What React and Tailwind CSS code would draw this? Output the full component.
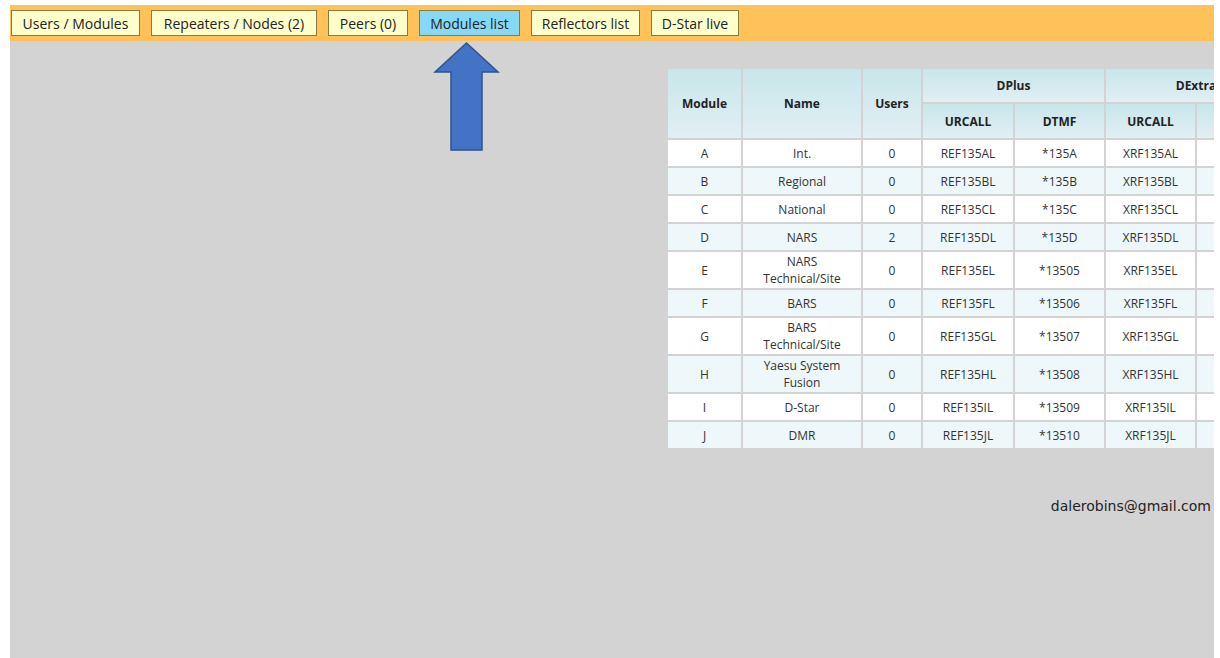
import React from "react";

const tabs = [
  { label: "Users / Modules", w: "w-[129px]" },
  { label: "Repeaters / Nodes (2)", w: "w-[166px]" },
  { label: "Peers (0)", w: "w-[80px]" },
  { label: "Modules list", w: "w-[101px]", active: true },
  { label: "Reflectors list", w: "w-[109px]" },
  { label: "D-Star live", w: "w-[88px]" },
];

const modules = [
  ["A", ["Int."], "0", "REF135AL", "*135A", "XRF135AL", "*135A"],
  ["B", ["Regional"], "0", "REF135BL", "*135B", "XRF135BL", "*135B"],
  ["C", ["National"], "0", "REF135CL", "*135C", "XRF135CL", "*135C"],
  ["D", ["NARS"], "2", "REF135DL", "*135D", "XRF135DL", "*135D"],
  ["E", ["NARS", "Technical/Site"], "0", "REF135EL", "*13505", "XRF135EL", "*13505"],
  ["F", ["BARS"], "0", "REF135FL", "*13506", "XRF135FL", "*13506"],
  ["G", ["BARS", "Technical/Site"], "0", "REF135GL", "*13507", "XRF135GL", "*13507"],
  ["H", ["Yaesu System", "Fusion"], "0", "REF135HL", "*13508", "XRF135HL", "*13508"],
  ["I", ["D-Star"], "0", "REF135IL", "*13509", "XRF135IL", "*13509"],
  ["J", ["DMR"], "0", "REF135JL", "*13510", "XRF135JL", "*13510"],
];

const head =
  "bg-gradient-to-b from-[#c8e6ea] to-[#e2eff4] font-bold text-[#222] text-center align-middle";

function UpArrow() {
  return (
    <svg
      className="absolute left-[423px] top-[0px]"
      width="67"
      height="112"
      viewBox="0 0 67 112"
    >
      <polygon
        points="33.5,2 2,31 18,31 18,109 49,109 49,31 65,31"
        fill="#4472c4"
        stroke="#2f528f"
        strokeWidth="1.5"
        strokeLinejoin="miter"
      />
    </svg>
  );
}

export default function App() {
  return (
    <div
      className="h-[658px] bg-white pl-[10px] pr-[6px] pt-[5px] flex flex-col"
      style={{ fontFamily: '"Open Sans", "Noto Sans", sans-serif' }}
    >
      <nav className="h-[36px] bg-[#ffc25a] flex items-center gap-[11px] pl-[1px] shrink-0">
        {tabs.map((t) => (
          <div
            key={t.label}
            className={`${t.w} h-[26px] flex items-center justify-center border border-[#8a7a3c] text-[14px] text-[#222] ${
              t.active ? "bg-[#86d8f7]" : "bg-[#ffffcc]"
            }`}
          >
            {t.label}
          </div>
        ))}
      </nav>

      <main className="relative flex-1 bg-[#d3d3d3] overflow-hidden">
        <UpArrow />
        <div className="pl-[656px] pt-[26px] w-[1600px]">
          <table className="border-separate border-spacing-[2px] text-[12px] text-[#333] leading-[17px]">
            <thead>
              <tr>
                <th rowSpan={2} className={`${head} w-[73px]`}>Module</th>
                <th rowSpan={2} className={`${head} w-[118px]`}>Name</th>
                <th rowSpan={2} className={`${head} w-[58px]`}>Users</th>
                <th colSpan={2} className={`${head} h-[33px]`}>DPlus</th>
                <th colSpan={2} className={`${head}`}>DExtra</th>
                <th colSpan={2} className={`${head}`}>DCS</th>
              </tr>
              <tr>
                <th className={`${head} w-[90px] h-[34px]`}>URCALL</th>
                <th className={`${head} w-[89px]`}>DTMF</th>
                <th className={`${head} w-[89px]`}>URCALL</th>
                <th className={`${head} w-[89px]`}>DTMF</th>
                <th className={`${head} w-[89px]`}>URCALL</th>
                <th className={`${head} w-[89px]`}>DTMF</th>
              </tr>
            </thead>
            <tbody>
              {modules.map((m, i) => {
                const bg = i % 2 === 0 ? "bg-white" : "bg-[#eef8fa]";
                const cell = `${bg} text-center align-middle h-[26px] py-[1px]`;
                return (
                  <tr key={m[0]}>
                    <td className={cell}>{m[0]}</td>
                    <td className={cell}>
                      {m[1].map((line) => (
                        <div key={line}>{line}</div>
                      ))}
                    </td>
                    <td className={cell}>{m[2]}</td>
                    <td className={cell}>{m[3]}</td>
                    <td className={cell}>{m[4]}</td>
                    <td className={cell}>{m[5]}</td>
                    <td className={cell}>{m[6]}</td>
                    <td className={cell}>{m[5].replace("XRF", "DCS")}</td>
                    <td className={cell}>{m[6]}</td>
                  </tr>
                );
              })}
            </tbody>
          </table>
        </div>
        <div
          className="mt-[46px] text-right pr-[3px] text-[14px] text-[#222]"
          style={{ fontFamily: '"DejaVu Sans", Verdana, sans-serif' }}
        >
          dalerobins@gmail.com
        </div>
      </main>
    </div>
  );
}
